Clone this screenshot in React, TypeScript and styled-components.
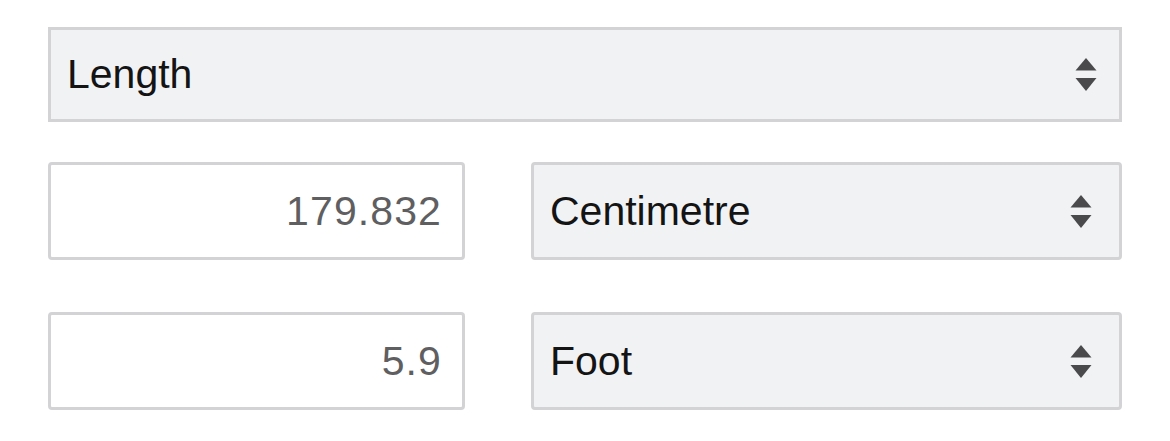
import {FunctionComponent} from 'react';
import styled, {createGlobalStyle} from 'styled-components';

const GlobalStyle = createGlobalStyle`
  html, body {
    margin: 0;
    padding: 0;
    background: #ffffff;
  }
  body {
    font-family: 'Liberation Sans', Arial, sans-serif;
  }
`;

const Page = styled.main`
  width: 1170px;
  height: 441px;
  box-sizing: border-box;
  padding: 27px 48px 0 48px;
  display: flex;
  flex-direction: column;
  gap: 40px;
`;

const Row = styled.div<{$top?: number}>`
  display: grid;
  grid-template-columns: 417px 1fr;
  column-gap: 66px;
  margin-top: ${(p) => p.$top || 0}px;
`;

const SelectBox = styled.div<{$square?: boolean}>`
  box-sizing: border-box;
  height: ${(p) => (p.$square ? 95 : 98)}px;
  display: flex;
  align-items: center;
  justify-content: space-between;
  padding: 0 ${(p) => (p.$square ? 22 : 27)}px 0 16px;
  background: #f1f2f4;
  border: 3px solid #d3d3d5;
  border-radius: ${(p) => (p.$square ? 0 : 4)}px;
  font-size: 41px;
  color: #141414;
`;

const NumberBox = styled.div`
  box-sizing: border-box;
  height: 98px;
  display: flex;
  align-items: center;
  justify-content: flex-end;
  padding: 0 20px 0 16px;
  background: #ffffff;
  border: 3px solid #d3d3d5;
  border-radius: 4px;
  font-size: 41px;
  letter-spacing: 1.1px;
  color: #5f5f62;
`;

const Arrows: FunctionComponent = () => (
  <svg width="22" height="33" viewBox="0 0 22 33">
    <path d="M11 0 L21.5 12.5 L0.5 12.5 Z" fill="#4a4a4c" />
    <path d="M0.5 20 L21.5 20 L11 33 Z" fill="#4a4a4c" />
  </svg>
);

const Select: FunctionComponent<{label: string; square?: boolean}> = ({label, square}) => (
  <SelectBox $square={square}>
    <span>{label}</span>
    <Arrows />
  </SelectBox>
);

const App: FunctionComponent = () => {
  const rows = [
    {value: '179.832', unit: 'Centimetre'},
    {value: '5.9', unit: 'Foot'},
  ];

  return (
    <>
      <GlobalStyle />
      <Page>
        <Select label="Length" square />
        {rows.map((row, i) => (
          <Row key={row.unit} $top={i === 0 ? 0 : 12}>
            <NumberBox>{row.value}</NumberBox>
            <Select label={row.unit} />
          </Row>
        ))}
      </Page>
    </>
  );
};

export default App;
